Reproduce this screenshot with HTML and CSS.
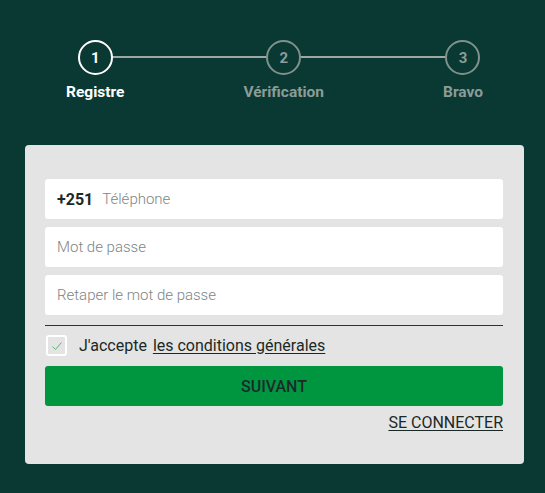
FILE: index.html
```html
<!DOCTYPE html>
<html lang="fr">
<head>
<meta charset="utf-8">
<title>Registre</title>
<link rel="stylesheet" href="styles.css">
</head>
<body>
<div class="page">
  <div class="stepper">
    <div class="track"></div>
    <div class="step active">
      <div class="circle">1</div>
      <div class="label">Registre</div>
    </div>
    <div class="step">
      <div class="circle">2</div>
      <div class="label">Vérification</div>
    </div>
    <div class="step">
      <div class="circle">3</div>
      <div class="label">Bravo</div>
    </div>
  </div>
  <form class="card">
    <div class="fields">
      <label class="field">
        <span class="prefix">+251</span>
        <input class="input" type="tel" placeholder="Téléphone">
      </label>
      <label class="field">
        <input class="input" type="password" placeholder="Mot de passe">
      </label>
      <label class="field">
        <input class="input" type="password" placeholder="Retaper le mot de passe">
      </label>
    </div>
    <div class="divider"></div>
    <div class="terms">
      <span class="checkbox">
        <svg width="14" height="14" viewBox="0 0 14 14"><polyline points="2.5,7.5 5.5,10.5 11.5,3.5" fill="none" stroke="#5fb27a" stroke-width="1"/></svg>
      </span>
      <span class="terms-text">J'accepte</span>
      <a class="terms-link" href="#">les conditions générales</a>
    </div>
    <button class="btn" type="button">SUIVANT</button>
    <div class="login-row">
      <a class="login" href="#">SE CONNECTER</a>
    </div>
  </form>
</div>
</body>
</html>
```

FILE: styles.css
```css
* { box-sizing: border-box; }
html, body {
  margin: 0;
  background: #0a3832;
  font-family: Roboto, "Noto Sans", sans-serif;
}
.page {
  width: 499px;
  margin-left: 25px;
  padding-top: 40px;
}
.stepper {
  position: relative;
  display: flex;
  justify-content: space-between;
  margin: 0 41px;
}
.track {
  position: absolute;
  top: 16px;
  left: 29px;
  right: 20px;
  height: 2px;
  background: #9aa9a4;
}
.step {
  position: relative;
  display: flex;
  flex-direction: column;
  align-items: center;
}
.circle {
  width: 35px;
  height: 35px;
  border: 2px solid #7f918b;
  border-radius: 50%;
  background: #0a3832;
  color: #8c9c97;
  font-weight: 700;
  font-size: 15px;
  display: flex;
  align-items: center;
  justify-content: center;
}
.label {
  margin-top: 8px;
  font-size: 15.5px;
  line-height: 18px;
  font-weight: 700;
  color: #8c9c97;
}
.step.active .circle {
  border-color: #ffffff;
  color: #ffffff;
}
.step.active .label { color: #ffffff; }

.card {
  margin-top: 44px;
  background: #e4e4e4;
  border-radius: 4px;
  padding: 34px 21px 32px 20px;
}
.fields {
  display: flex;
  flex-direction: column;
  gap: 8px;
}
.field {
  display: flex;
  align-items: center;
  height: 40px;
  background: #ffffff;
  border-radius: 3px;
  padding: 0 12px;
}
.prefix {
  font-size: 16px;
  font-weight: 700;
  color: #1b2926;
  margin-right: 9px;
}
.input {
  flex: 1;
  border: 0;
  outline: 0;
  padding: 0;
  background: transparent;
  font-family: inherit;
  font-size: 15px;
  font-weight: 300;
  color: #1b2926;
}
.input::placeholder {
  color: #7d8683;
  opacity: 1;
}
.divider {
  margin-top: 10px;
  height: 1px;
  background: #2c3331;
}
.terms {
  display: flex;
  align-items: center;
  margin-top: 9px;
  height: 21px;
}
.checkbox {
  width: 21px;
  height: 21px;
  border: 2px solid #ffffff;
  border-radius: 3px;
  display: flex;
  align-items: center;
  justify-content: center;
  margin-left: 1px;
  margin-right: 12px;
}
.terms-text {
  font-size: 16px;
  color: #1b2926;
  margin-right: 6px;
}
.terms-link {
  font-size: 16px;
  color: #1b2926;
  text-decoration: underline;
  text-underline-offset: 2px;
}
.btn {
  display: block;
  width: 100%;
  margin-top: 10px;
  height: 40px;
  border: 0;
  border-radius: 3px;
  background: #009640;
  color: #1b2b2a;
  font-family: inherit;
  font-size: 16px;
  font-weight: 500;
}
.login-row {
  display: flex;
  justify-content: flex-end;
  margin-top: 8px;
}
.login {
  font-size: 16px;
  line-height: 18px;
  color: #1b2926;
  text-decoration: underline;
  text-underline-offset: 2px;
}
```
